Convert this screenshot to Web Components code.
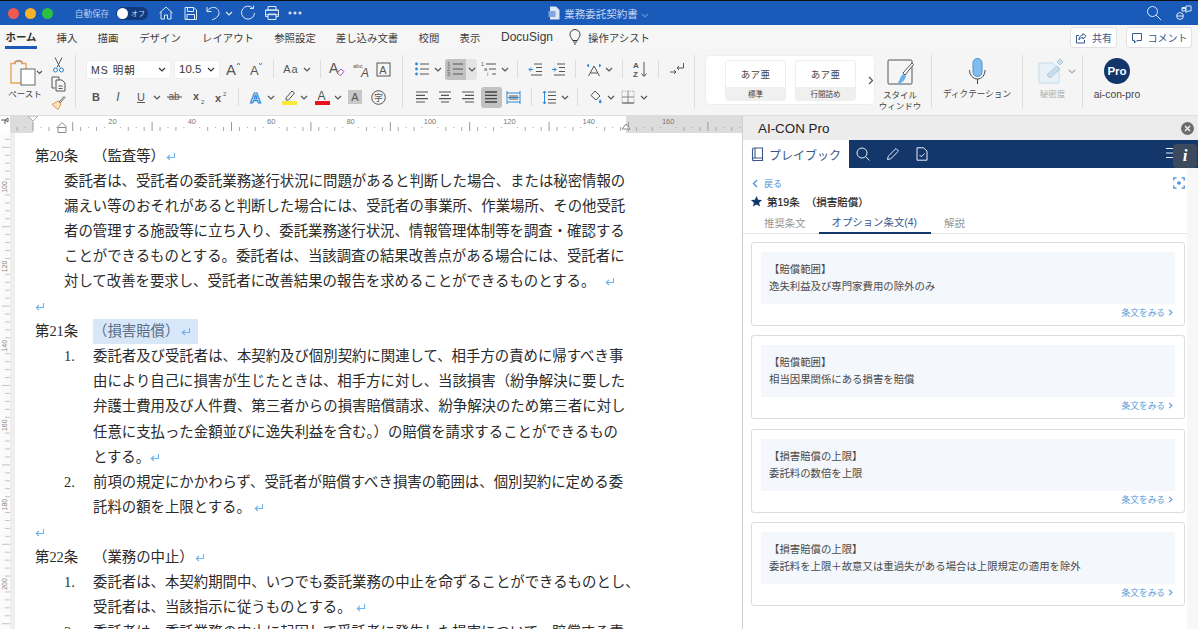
<!DOCTYPE html>
<html lang="ja">
<head>
<meta charset="utf-8">
<title>業務委託契約書</title>
<style>
html,body{margin:0;padding:0;height:629px;overflow:hidden;background:#fff}
body{display:flex;flex-direction:column;width:1198px;font-family:"Liberation Sans","Noto Sans CJK JP",sans-serif}
.work{display:flex;height:513px;overflow:hidden}
</style>
</head>
<body>
<title-bar></title-bar>
<tab-strip></tab-strip>
<word-ribbon></word-ribbon>
<div class="work">
  <doc-view>
    <doc-head no="第20条">（監査等）<ret-mark style="margin-left:1px"></ret-mark></doc-head>
    <doc-para>
      <div>委託者は、受託者の委託業務遂行状況に問題があると判断した場合、または秘密情報の</div>
      <div>漏えい等のおそれがあると判断した場合には、受託者の事業所、作業場所、その他受託</div>
      <div>者の管理する施設等に立ち入り、委託業務遂行状況、情報管理体制等を調査・確認する</div>
      <div>ことができるものとする。委託者は、当該調査の結果改善点がある場合には、受託者に</div>
      <div>対して改善を要求し、受託者に改善結果の報告を求めることができるものとする。<ret-mark style="margin-left:10px"></ret-mark></div>
    </doc-para>
    <doc-head><ret-mark></ret-mark></doc-head>
    <doc-head no="第21条" mark>（損害賠償）<ret-mark style="margin-left:2px"></ret-mark></doc-head>
    <doc-item no="1.">
      <div>委託者及び受託者は、本契約及び個別契約に関連して、相手方の責めに帰すべき事</div>
      <div>由により自己に損害が生じたときは、相手方に対し、当該損害（紛争解決に要した</div>
      <div>弁護士費用及び人件費、第三者からの損害賠償請求、紛争解決のため第三者に対し</div>
      <div>任意に支払った金額並びに逸失利益を含む。）の賠償を請求することができるもの</div>
      <div>とする。<ret-mark></ret-mark></div>
    </doc-item>
    <doc-item no="2.">
      <div>前項の規定にかかわらず、受託者が賠償すべき損害の範囲は、個別契約に定める委</div>
      <div>託料の額を上限とする。<ret-mark style="margin-left:3px"></ret-mark></div>
    </doc-item>
    <doc-head><ret-mark></ret-mark></doc-head>
    <doc-head no="第22条">（業務の中止）<ret-mark style="margin-left:1px"></ret-mark></doc-head>
    <doc-item no="1.">
      <div>委託者は、本契約期間中、いつでも委託業務の中止を命ずることができるものとし、</div>
      <div>受託者は、当該指示に従うものとする。<ret-mark style="margin-left:4px"></ret-mark></div>
    </doc-item>
    <doc-item no="2.">
      <div>委託者は、委託業務の中止に起因して受託者に発生した損害について、賠償する責</div>
    </doc-item>
  </doc-view>
  <ai-panel>
    <option-card title="【賠償範囲】">逸失利益及び専門家費用の除外のみ</option-card>
    <option-card title="【賠償範囲】">相当因果関係にある損害を賠償</option-card>
    <option-card title="【損害賠償の上限】">委託料の数倍を上限</option-card>
    <option-card title="【損害賠償の上限】">委託料を上限＋故意又は重過失がある場合は上限規定の適用を除外</option-card>
  </ai-panel>
</div>

<script>
// small svg helper, strokes use currentColor unless told otherwise
const ic = (w, h, body, extra = "") =>
  `<svg width="${w}" height="${h}" viewBox="0 0 ${w} ${h}" fill="none" stroke="currentColor" stroke-width="1" style="overflow:visible" ${extra}>${body}</svg>`

// puts items in a flex row so each one is centred on the given x
const place = (items, origin = 0) => {
  let end = origin, out = ""
  for (const [cx, w, html] of items) {
    const ml = cx - w / 2 - end
    out += `<span class="c" style="width:${w}px;margin-left:${ml}px">${html}</span>`
    end = cx + w / 2
  }
  return out
}

const chev = ic(8, 5, '<path d="M1 1l3 3 3-3" stroke-width="1.2"/>')
const sep = `<span style="display:block;width:1px;height:18px;background:#dcdcdc"></span>`
const t = (x, y, s, size, extra = "") => `<text x="${x}" y="${y}" font-size="${size}" stroke="none" fill="currentColor" ${extra}>${s}</text>`

const defineEl = (name, html, init) => customElements.define(name, class extends HTMLElement {
  constructor() {
    super()
    this.attachShadow({mode: "open"}).innerHTML = typeof html === "function" ? html(this) : html
    if (init) init(this)
  }
})

defineEl("ret-mark", `<style>:host{display:inline-block;margin-left:0;vertical-align:-1px;color:#6db3ee;line-height:0}</style>
${ic(10, 10, '<path d="M8.5 1v4.5H1.5M4 3L1.3 5.5 4 8" stroke-width="1.1"/>')}`)

defineEl("title-bar", `<style>
:host{display:flex;align-items:center;height:25px;box-sizing:border-box;border-top:1px solid #111;background:#1a5ab8;color:#dfe9f7;flex:none}
.c{display:flex;justify-content:center;align-items:center;flex:none;white-space:nowrap}
.dot{width:11px;height:11px;border-radius:50%}
.auto{font-size:8.6px;color:#b5cdf0}
.tg{width:32px;height:13px;border-radius:7px;background:#10397c;display:flex;align-items:center;padding-left:1px;box-sizing:border-box;font-size:7px;color:#cfe0f6;gap:3px}
.tg i{width:11px;height:11px;border-radius:50%;background:#fff}
.name{font-size:10.5px;color:#c5d7f2}
</style>
${place([
  [13, 11, '<span class="dot" style="background:#ee5a52"></span>'],
  [30, 11, '<span class="dot" style="background:#f6b22c"></span>'],
  [47, 11, '<span class="dot" style="background:#2cc043"></span>'],
  [92, 36, '<span class="auto">自動保存</span>'],
  [132, 32, '<span class="tg"><i></i>オフ</span>'],
  [166, 16, ic(16, 16, '<path d="M1.5 8L8 2l6.5 6M3 6.8V14h3.5v-4h3v4H13V6.8"/>')],
  [190, 15, ic(15, 15, '<path d="M2 1.5h9l2.5 2.5v9.5H2zM4.5 1.5v4h6v-4M4 13.5V8.5h7.5v5"/>')],
  [213, 16, ic(16, 16, '<path d="M2 2v4.5h4.5M2.2 6.3C4 3 8 1.5 11 3s4 5.5 2 8-4 3-6 4"/>')],
  [229, 8, chev],
  [248, 16, ic(16, 16, '<path d="M13 3.5A6.5 6.5 0 1 0 14.5 8M10 3.5h3.5V0.5"/>')],
  [272, 16, ic(16, 16, '<path d="M4 5V1.5h8V5M4 11.5H1.5V5h13v6.5H12M4 9h8v5.5H4z" /><path d="M2.5 5.2h11a1.5 1.5 0 0 1 1 1.5v3h-13v-3a1.5 1.5 0 0 1 1-1.5z"/>')],
  [295, 14, ic(14, 4, '<circle cx="2" cy="2" r="1.1" fill="currentColor"/><circle cx="7" cy="2" r="1.1" fill="currentColor"/><circle cx="12" cy="2" r="1.1" fill="currentColor"/>')],
  [554, 12, ic(12, 14, '<path d="M2 0.5h6l3.5 3.5v9.5H2z" fill="#dce8f8" stroke="none"/><rect x="0.5" y="5" width="7" height="6" fill="#7fa6dd" stroke="none"/>')],
  [601, 74, '<span class="name">業務委託契約書</span>'],
  [645, 8, `<span style="color:#5f8fd6">${chev}</span>`],
  [1154, 16, ic(16, 16, '<circle cx="6.5" cy="6.5" r="5"/><path d="M10.2 10.2l5 5"/>')],
  [1184, 16, ic(16, 16, '<circle cx="4" cy="11" r="3.4"/><path d="M1 11h6M6 3.5h3M10 1h5v5h-3l-2 1.5zM6 2.5h3.5V6H6z"/>')]
])}`)

defineEl("tab-strip", `<style>
:host{display:flex;align-items:center;height:24px;background:#f6f6f6;flex:none;position:relative;color:#3c3c3c;font-size:10.4px;white-space:nowrap}
.c{display:flex;justify-content:center;align-items:center;flex:none}
.on{font-weight:700;color:#333;height:24px;box-sizing:border-box;padding-top:2px;border-bottom:3px solid #1a5ab8;width:100%;justify-content:center;display:flex;align-items:center}
.btn{height:21px;box-sizing:border-box;border:1px solid #e2e2e2;border-radius:3px;background:#fff;display:flex;align-items:center;justify-content:center;gap:5px;color:#39598d;font-size:10px;width:100%}
.c:nth-last-child(-n+2){margin-top:1px}
.ds{font-size:12px}
</style>
${place([
  [21, 32, '<span class="on">ホーム</span>'],
  [67, 21, '挿入'],
  [108, 21, '描画'],
  [160, 42, 'デザイン'],
  [228, 52, 'レイアウト'],
  [295, 42, '参照設定'],
  [367, 63, '差し込み文書'],
  [429, 21, '校閲'],
  [470, 21, '表示'],
  [527, 54, '<span class="ds">DocuSign</span>'],
  [575, 12, ic(12, 16, '<path d="M3.5 11.5C3 9 1 8.5 1 5.5a5 5 0 0 1 10 0c0 3-2 3.5-2.5 6zM4 13h4M5 15h2"/>')],
  [619, 63, '操作アシスト'],
  [1093.5, 47, `<span class="btn">${ic(12, 12, '<path d="M8 1.5l3 2.8-3 2.8V5.5C5.5 5.5 4.500 6.500 4 8 4 5 5.5 3.2 8 3zM9.5 8v3H1.5V3.5H4"/>')}共有</span>`],
  [1159, 66, `<span class="btn">${ic(12, 12, '<path d="M1.5 1.5h9v7H6L3.5 11V8.5h-2z"/>')}コメント</span>`]
])}`)

// ribbon icons, one per tool
const I = {
  bullets: ic(16, 16, '<g fill="#2b88d8" stroke="none"><circle cx="2.5" cy="3" r="1.4"/><circle cx="2.5" cy="8" r="1.4"/><circle cx="2.5" cy="13" r="1.4"/></g><path d="M6 3h9M6 8h9M6 13h9"/>'),
  numbered: ic(17, 16, `<g fill="#2b88d8" stroke="none">${t(0, 5, "1", 5.5)}${t(0, 10, "2", 5.5)}${t(0, 15, "3", 5.5)}</g><path d="M6 3h10M6 8h10M6 13h10"/>`),
  multi: ic(16, 16, `<g fill="#2b88d8" stroke="none">${t(0, 5, "1", 5.5)}${t(3, 10, "a", 5.5)}${t(6, 15, "i", 5.5)}</g><path d="M5 3h10M8 8h7M11 13h4"/>`),
  outdent: ic(15, 13, '<path d="M6 1h8M8 4.5h6M8 8.5h6M3 12h11" /><path d="M5 6.5H1M3 4.5l-2 2 2 2" stroke="#2b88d8"/>'),
  indent: ic(15, 13, '<path d="M6 1h8M8 4.5h6M8 8.5h6M3 12h11" /><path d="M1 6.5h4M3 4.5l2 2-2 2" stroke="#2b88d8"/>'),
  wide: ic(16, 16, `<path d="M3 3l-2 1.5L3 6M13 3l2 1.5L13 6" stroke="#2b88d8"/><path d="M1 4.5h2M13 4.5h2" stroke="#2b88d8"/><path d="M2.5 15L8 5l5.5 10M4.5 12h7"/>`),
  sort: ic(16, 17, `<g stroke="none" font-weight="700">${t(1, 7, "A", 8, 'fill="#2b88d8"')}${t(1, 16, "Z", 8)}</g><path d="M12 1v14M9.5 12.5L12 15.5l2.5-3"/>`),
  mark: ic(16, 15, '<path d="M14.5 1v5H8M10 4L8 6l2 2M1 10h6M5 8l2 2-2 2"/>'),
  left: ic(14, 12, '<path d="M1 1h12M1 4.3h9M1 7.6h12M1 11h9" stroke-width="1.2"/>'),
  center: ic(14, 12, '<path d="M1 1h12M3 4.3h8M1 7.6h12M3 11h8" stroke-width="1.2"/>'),
  right: ic(14, 12, '<path d="M1 1h12M4 4.3h9M1 7.6h12M4 11h9" stroke-width="1.2"/>'),
  just: ic(14, 12, '<path d="M1 1h12M1 4.3h12M1 7.6h12M1 11h12" stroke-width="1.3"/>'),
  dist: ic(15, 15, '<path d="M1 1v13M14 1v13M1 3h13M1 12h13" stroke="#2b88d8"/><path d="M3 6h9M3 9h9"/><path d="M2 7.5h11" stroke="#2b88d8"/>'),
  spacing: ic(15, 15, '<path d="M2.5 1v13M1 3l1.5-2L4 3M1 12l1.5 2L4 12" stroke="#2b88d8"/><path d="M6 2h8M6 5.5h8M6 9.5h8M6 13h8"/>'),
  fill: ic(15, 14, '<path d="M6 1l5 5-4 4-5-4.5z"/><path d="M11 9c1 1.5 1.5 2 1.5 3a1 1 0 0 1-2.5 0c0-1 .5-1.5 1-3z" fill="#2b88d8" stroke="none"/>'),
  border: ic(14, 14, '<rect x="1" y="1" width="12" height="12" stroke="#aaa" stroke-dasharray="1.5 1"/><path d="M7 1v12M1 7h12" stroke="#888"/><path d="M1 13h12" stroke="#555"/>'),
  cut: ic(13, 16, '<path d="M3 0.5l5 10M10 0.5l-5 10" stroke="#555"/><circle cx="3.5" cy="13" r="2" stroke="#2b88d8"/><circle cx="9.5" cy="13" r="2" stroke="#2b88d8"/>'),
  copy: ic(15, 16, '<path d="M1 1h7v3M1 1v11h3"/><path d="M5 4h6l3 3v8H5zM7.5 10h4M7.5 12.5h4"/>'),
  brush: ic(15, 15, '<path d="M8 7l5-5.500 1 1-5 5.500z" stroke="#666"/><path d="M7 6l3 3-3 5.500L1 9.500z" fill="#fbe2c5" stroke="#e59a4b"/>')
}
const L = (s, size, extra = "") => `<span style="font-size:${size}px;${extra}">${s}</span>`

const fontRow1 = place([
  [128.5, 85, `<span class="sel" style="justify-content:space-between">MS 明朝${chev}</span>`],
  [197, 46, `<span class="sel" style="font-size:11.5px;letter-spacing:0;justify-content:space-between">10.5${chev}</span>`],
  [233, 16, ic(16, 16, `${t(1, 14, "A", 15, 'font-family="Liberation Sans"')}<path d="M12 4l1.5-2L15 4" stroke="#666"/>`)],
  [256, 14, ic(16, 16, `${t(2, 14, "A", 13, 'font-family="Liberation Sans"')}<path d="M11 2l1.500 2L14 2" stroke="#2b88d8"/>`)],
  [273, 1, sep],
  [291, 16, L("Aa", 11, "letter-spacing:1px")],
  [307, 8, chev],
  [320, 1, sep],
  [337, 16, ic(16, 16, `${t(0, 12, "A", 14, 'font-family="Liberation Sans"')}<path d="M8 12l4-4 3 2.5-3.5 4z" stroke="#a35bb5"/>`)],
  [361, 17, ic(17, 17, `${t(0, 7, "abc", 6, 'fill="#888"')}<g fill="#2b88d8">${t(8, 16, "A", 12, 'font-family="Liberation Sans" font-style="italic"')}</g>`)],
  [383, 15, ic(15, 15, `<rect x="1" y="1" width="13" height="13"/>${t(3.3, 12, "A", 11, 'font-family="Liberation Sans"')}`)]
], 76)
const fontRow2 = place([
  [96, 12, L("B", 11, "font-weight:700")],
  [118, 12, L("I", 12, 'font-style:italic;font-family:"Liberation Serif"')],
  [141, 12, L("U", 11, "text-decoration:underline")],
  [157, 8, chev],
  [174, 15, ic(15, 12, `${t(1.5, 9, "ab", 10, 'font-family="Liberation Sans"')}<path d="M0 6h15"/>`)],
  [199, 15, ic(15, 15, `${t(1, 10, "x", 11, 'font-weight="700" font-family="Liberation Sans"')}<g fill="#2b88d8">${t(9, 14, "2", 6)}</g>`)],
  [221, 15, ic(15, 15, `${t(1, 12, "x", 11, 'font-weight="700" font-family="Liberation Sans"')}<g fill="#2b88d8">${t(9, 6, "2", 6)}</g>`)],
  [238, 1, sep],
  [256, 15, ic(15, 15, `<text x="1" y="13" font-size="15" font-weight="700" font-family="Liberation Sans" fill="#fff" stroke="#2b88d8" stroke-width="1.2">A</text>`)],
  [271, 8, chev],
  [289, 15, ic(15, 16, `<path d="M4 9l6-7 2.5 2-6 7H4z"/><rect x="0" y="12" width="15" height="4" fill="#f9ea35" stroke="none"/>`)],
  [304, 8, chev],
  [322, 15, ic(15, 16, `${t(2.5, 11, "A", 12, 'font-family="Liberation Sans"')}<rect x="0" y="12" width="15" height="4" fill="#e8141c" stroke="none"/>`)],
  [338, 8, chev],
  [355, 14, `<span style="width:14px;height:14px;background:#c8c8c8;display:flex;align-items:center;justify-content:center;font-size:11px">A</span>`],
  [378, 15, ic(15, 15, `<circle cx="7.5" cy="7.5" r="6.8"/>${t(3, 11, "字", 9)}`)]
], 76)
const paraRow1 = place([
  [422, 16, I.bullets], [438, 8, chev],
  [461, 32, `<span class="hl2"><b>${I.numbered}</b><i>${chev}</i></span>`],
  [489, 16, I.multi], [505, 8, chev],
  [517, 1, sep],
  [535, 15, I.outdent], [558, 15, I.indent],
  [575, 1, sep],
  [594, 16, I.wide], [609, 8, chev],
  [622, 1, sep],
  [640, 16, I.sort],
  [658, 1, sep],
  [677, 16, I.mark]
], 403)
const paraRow2 = place([
  [422, 14, I.left], [445, 14, I.center], [468, 14, I.right],
  [491, 21, `<span class="hl">${I.just}</span>`],
  [513, 15, I.dist],
  [531, 1, sep],
  [549, 15, I.spacing], [565, 8, chev],
  [577, 1, sep],
  [596, 15, I.fill], [611, 8, chev],
  [628, 14, I.border], [644, 8, chev]
], 403)

defineEl("word-ribbon", `<style>
:host{display:flex;align-items:flex-start;height:67px;box-sizing:border-box;padding-top:6px;background:#f5f5f5;border-bottom:1px solid #dedede;flex:none;color:#555;white-space:nowrap}
.g{height:53px;box-sizing:border-box;border-right:1px solid #dcdcdc;flex:none}
.rows{display:flex;flex-direction:column}
.row{display:flex;align-items:center;height:28px;flex:none}
.c{display:flex;justify-content:center;align-items:center;flex:none}
.sel{width:100%;height:19px;box-sizing:border-box;background:#fff;border-radius:3px;border:1px solid #eee;display:flex;align-items:center;padding:0 4px;color:#333;font-size:10.5px;letter-spacing:1px}
.hl{width:21px;height:21px;background:#c2c2c2;border-radius:3px;display:flex;align-items:center;justify-content:center;color:#444}
.hl2{width:32px;height:21px;background:#e4e4e4;border-radius:3px;display:flex;overflow:hidden}
.hl2 b{width:21px;background:#c2c2c2;display:flex;align-items:center;justify-content:center;font-weight:400}
.hl2 i{flex:1;display:flex;align-items:center;justify-content:center}
.clip{width:76px;display:flex}
.paste{width:46px;display:flex;flex-direction:column;align-items:center;font-size:8.5px;color:#444;padding-top:4px;margin-left:2px}
.paste span{display:block;margin-top:1px}
.tools{display:flex;flex-direction:column;align-items:center;width:20px;gap:3px;margin-top:2px;margin-left:0}
.styles{width:237px;display:flex;align-items:flex-start;padding-left:10px}
.box{width:170px;height:50px;box-sizing:border-box;background:#fff;border-radius:4px;display:flex;align-items:center;padding-left:19px;gap:9px;border:1px solid #eee}
.sc{width:61px;height:41px;box-sizing:border-box;border:1px solid #eee;border-radius:3px;display:flex;flex-direction:column;font-size:7.5px;color:#444}
.sc b{flex:1;font-weight:400;display:flex;align-items:center;justify-content:center;font-size:9.5px;letter-spacing:.4px}
.sc span{height:13px;background:#f0f0f0;display:flex;align-items:center;justify-content:center}
.sw{width:50px;display:flex;flex-direction:column;align-items:center;font-size:8.5px;line-height:10.5px;color:#444;padding-top:4px;text-align:center}
.sw span{margin-top:5px}
.dict{width:91px;display:flex;flex-direction:column;align-items:center;font-size:8.6px;color:#444;padding-top:3px}
.dict span{margin-top:2px}
.sens{width:60px;display:flex;flex-direction:column;align-items:center;font-size:8.5px;color:#aaa;padding-top:3px}
.sens span{margin-top:3px}
.sens div{display:flex;align-items:center;gap:5px;margin-left:9px}
.pro{width:68px;display:flex;flex-direction:column;align-items:center;font-size:10.3px;color:#444;padding-top:3px}
.pro b{width:26px;height:26px;border-radius:50%;background:#12356a;color:#fff;font-size:11.5px;display:flex;align-items:center;justify-content:center}
.pro span{margin-top:5px}
.pa{display:flex;align-items:center;gap:1px}
.more{margin-left:3px}
</style>
<div class="g clip">
  <div class="paste">
    <div class="pa">${ic(33, 27, `<path d="M2 4.5h4V2.5h7v2h4V24H2z" stroke="#e8a657" stroke-width="1.4"/><path d="M5.5 5l2-3.5h4l2 3.5" stroke="#999"/><rect x="12" y="10" width="14" height="16" fill="#fff" stroke="#666"/><path d="M28 12l2.5 2.5L33 12" stroke="#555" stroke-width="1.1"/>`)}</div>
    <span>ペースト</span>
  </div>
  <div class="tools">${I.cut}${I.copy}${I.brush}</div>
</div>
<div class="g rows" style="width:327px"><div class="row">${fontRow1}</div><div class="row">${fontRow2}</div></div>
<div class="g rows" style="width:292px"><div class="row">${paraRow1}</div><div class="row">${paraRow2}</div></div>
<div class="g styles">
  <div class="box">
    <div class="sc"><b>あア亜</b><span>標準</span></div>
    <div class="sc"><b>あア亜</b><span>行間詰め</span></div>
    <span class="more">${ic(6, 9, '<path d="M1 1l3.5 3.5L1 8" stroke-width="1.2"/>')}</span>
  </div>
  <div class="sw">
    ${ic(26, 26, `<rect x="1" y="1" width="24" height="24" rx="1" stroke="#555"/><path d="M16 14l9-10 1.500 1.500-8.500 10.500z" stroke="#555" fill="#fff"/><path d="M10 25c2-1 2-6 6-10l3 2c-1 4-3 7-9 8z" fill="#6bb1e8" stroke="none"/>`)}
    <span>スタイル<br>ウィンドウ</span>
  </div>
</div>
<div class="g dict">
  ${ic(18, 27, '<rect x="5" y="0.500" width="9" height="18" rx="4.500" fill="#82bdf0" stroke="#4c8fca"/><path d="M1.500 12c0 5 3.500 9 8 9s7.500-4 7.500-9M9.500 21v5"/>')}
  <span>ディクテーション</span>
</div>
<div class="g sens">
  <div>${ic(25, 26, '<path d="M1 5h14l6 6v14H1z" fill="#e8f1f8" stroke="#c5dcec"/><path d="M9 17l10-9 3 3-10 9z" fill="#c9dfee" stroke="#a9c9df"/><path d="M19 4l3-3 3 3-3 3z" fill="#c9dfee" stroke="#a9c9df"/>')}<span style="color:#aaa;margin:0">${chev}</span></div>
  <span>秘密度</span>
</div>
<div class="pro"><b>Pro</b><span>ai-con-pro</span></div>`)

// ruler with a tick every 2 units
const hRuler = () => {
  const u = 3.97, zero = 33
  let s = '<rect x="10" y="0" width="732" height="17" fill="#dcdcdc" stroke="none"/><rect x="33" y="0" width="593" height="17" fill="#fff" stroke="none"/>'
  for (let n = -4; n <= 178; n += 2) {
    const x = zero + n * u
    if (n % 20 === 0 && n > 0) { s += `<text x="${x}" y="8" font-size="7.5" text-anchor="middle" fill="#777" stroke="none">${n}</text>`; continue }
    if (n % 10 === 0) s += `<path d="M${x} 6v9" stroke="#999"/>`
    else s += `<path d="M${x} 11v${n % 4 ? 1 : 4}" stroke="#aaa"/>`
  }
  s += '<path d="M28 0h10l-5 5z" fill="#fff" stroke="#aaa"/>'
  s += '<path d="M58 10.500l4-4 4 4v6h-8zM58 11.500h8" fill="#fff" stroke="#888"/>'
  s += '<path d="M622 13l4-5 4 5z" fill="#fff" stroke="#888"/>'
  s += '<path d="M1 4h4v4M5 4l3-2v4z" stroke="#555"/>'
  return `<svg width="742" height="17" fill="none" style="display:block;font-family:'Liberation Sans'">${s}</svg>`
}
const vRuler = () => {
  const u = 3.97
  let s = ""
  for (let n = 88; n <= 212; n += 2) {
    const y = -210 + n * u
    if (n % 20 === 0) s += `<text x="0" y="0" transform="translate(7 ${y}) rotate(-90)" font-size="7" text-anchor="middle" fill="#888" stroke="none">${n}</text>`
    else s += `<path d="M${n % 10 === 0 ? 2 : 5} ${y}H10" stroke="#c4c4c4"/>`
  }
  return `<svg width="10" height="496" fill="none" style="display:block;font-family:'Liberation Sans'" viewBox="0 133 10 496">${s}</svg>`
}

defineEl("doc-view", `<style>
:host{display:flex;flex-direction:column;width:742px;flex:none;overflow:hidden}
.main{display:flex;flex:1;overflow:hidden}
.vr{width:10px;flex:none;background:#fbfbfb}
.gut{width:5px;flex:none;background:#eeeeee}
.page{flex:1;background:#fff;padding:11px 0 0 20px;font-family:"Liberation Serif","Noto Sans CJK JP",serif;font-size:14.4px;line-height:25.05px;color:#2a2a2a;white-space:nowrap}
</style>
${hRuler()}
<div class="main"><div class="vr">${vRuler()}</div><div class="gut"></div><div class="page"><slot></slot></div></div>`)

defineEl("doc-head", el => `<style>
:host{display:flex;height:25.05px}
.no{width:58px;flex:none}
.m{padding-right:${el.hasAttribute("mark") ? 7 : 0}px;${el.hasAttribute("mark") ? "background:#d7e7f9;color:#5b6c84;" : ""}height:25.05px}
</style>
${el.hasAttribute("no") ? `<span class="no">${el.getAttribute("no")}</span>` : ""}<span class="m"><slot></slot></span>`)

defineEl("doc-para", `<style>:host{display:block;padding-left:29px}</style><slot></slot>`)

defineEl("doc-item", el => `<style>
:host{display:flex;padding-left:29px}
.no{width:29px;flex:none}
</style><span class="no">${el.getAttribute("no")}</span><div><slot></slot></div>`)

defineEl("ai-panel", `<style>
:host{display:flex;flex-direction:column;flex:1;box-sizing:border-box;border-left:1px solid #cfcfcf;background:#fff;color:#333;overflow:hidden;white-space:nowrap}
.top{height:24px;background:#ececec;display:flex;align-items:center;justify-content:space-between;padding:0 4px 0 15px;font-size:13.4px;color:#222;flex:none}
.nav{height:28px;background:#14376b;display:flex;align-items:center;color:#e8eef7;flex:none;position:relative}
.play{width:106px;height:28px;background:#fff;display:flex;align-items:center;gap:5px;padding-left:8px;box-sizing:border-box;color:#3a5785;font-size:12px}
.play svg{flex:none}
.ni{display:flex;align-items:center;gap:16px;margin-left:7px}
.burger{margin-left:auto;margin-right:20px}
.tip{position:absolute;right:1px;top:4px;width:24px;height:24px;border-radius:4px;background:#3c4a5e;color:#fff;font:italic 700 17px "Liberation Serif",serif;display:flex;align-items:center;justify-content:center}
.body{flex:1;display:flex;overflow:hidden}
.col{width:444px;flex:none}
.bar{flex:1;background:#f7f7f7}
.back{display:flex;align-items:center;justify-content:space-between;height:18px;margin-top:6px;padding-left:9px;padding-right:2px;color:#4a8fd6;font-size:9px}
.back span{display:flex;align-items:center;gap:6px}
.ttl{display:flex;align-items:center;gap:5px;height:18px;padding-left:8px;font-size:10.5px;color:#222;-webkit-text-stroke:.2px #222}
.ttl em{font-style:normal;margin-left:6px}
.tabs{display:flex;height:23px;border-bottom:1px solid #e6e6e6;padding-left:8px;font-size:10.4px;color:#999}
.tabs span{display:flex;align-items:center;box-sizing:border-box;height:24px;padding:0 13px}
.tabs .on{color:#39598d;border-bottom:2px solid #14376b;padding-right:14px}
.cards{display:flex;flex-direction:column;gap:9.3px;padding:8px 0 0 8px}
</style>
<div class="top"><span>AI-CON Pro</span>${ic(13, 13, '<circle cx="6.500" cy="6.500" r="6.500" fill="#6c6c6c" stroke="none"/><path d="M4 4l5 5M9 4l-5 5" stroke="#eee" stroke-width="1.500"/>')}</div>
<div class="nav">
  <div class="play">${ic(13, 14, '<path d="M1.500 11.500V2.500a1.500 1.500 0 0 1 1.500-1.500h8.500v10H3a1.500 1.500 0 0 0-1.500 1.500 1 1 0 0 0 1.500 1h8.500v-3M4 1v10" stroke="#3a5785" stroke-width="1.100"/>')}<span>プレイブック</span></div>
  <div class="ni">
    ${ic(14, 14, '<circle cx="6" cy="6" r="5"/><path d="M9.700 9.700l3.800 3.800"/>')}
    ${ic(14, 14, '<path d="M1.500 12.500l.8-3.300L10 1.500 12.500 4l-7.700 7.700z"/>')}
    ${ic(12, 14, '<path d="M1 .8h6.500L11 4v9.200H1zM3.500 8l1.800 1.800L8.500 6.500"/>')}
  </div>
  <div class="burger">${ic(12, 12, '<path d="M0 1.500h12M0 6h12M0 10.500h12"/>')}</div>
  <div class="tip">i</div>
</div>
<div class="body"><div class="col">
  <div class="back"><span>${ic(6, 9, '<path d="M5 1L1.500 4.500 5 8" stroke-width="1.300"/>')}戻る</span>
    ${ic(12, 12, '<path d="M.8 3.500V.8h2.700M8.500.8h2.700v2.700M.8 8.500v2.700h2.700M8.500 11.200h2.700V8.500M4 6h4M6 4v4" stroke-width="1.300"/>')}
  </div>
  <div class="ttl">${ic(11, 11, '<path d="M5.500 0l1.600 3.700 4 .3-3 2.700.9 3.900-3.500-2-3.500 2 .9-3.900-3-2.700 4-.3z" fill="#14376b" stroke="none"/>')}<span>第19条<em>（損害賠償）</em></span></div>
  <div class="tabs"><span>推奨条文</span><span class="on">オプション条文(4)</span><span>解説</span></div>
  <div class="cards"><slot></slot></div>
</div><div class="bar"></div></div>`)

defineEl("option-card", el => `<style>
:host{display:block;width:434px;height:84px;box-sizing:border-box;border:1px solid #dcdcdc;border-radius:3px;padding:9px 9px 0;background:#fff}
.in{height:52px;box-sizing:border-box;background:#f4f7fb;padding:9px 8px 0;font-size:10.4px;line-height:17px;color:#4a4a4a}
.more{display:flex;justify-content:flex-end;align-items:center;gap:3px;height:17px;padding-right:2px;font-size:8.7px;color:#5a9bd8}
</style>
<div class="in"><div>${el.getAttribute("title")}</div><slot></slot></div>
<div class="more">条文をみる${ic(5, 7, '<path d="M1 .8L4 3.500 1 6.200" stroke-width="1.100"/>')}</div>`)
</script>
</body>
</html>
